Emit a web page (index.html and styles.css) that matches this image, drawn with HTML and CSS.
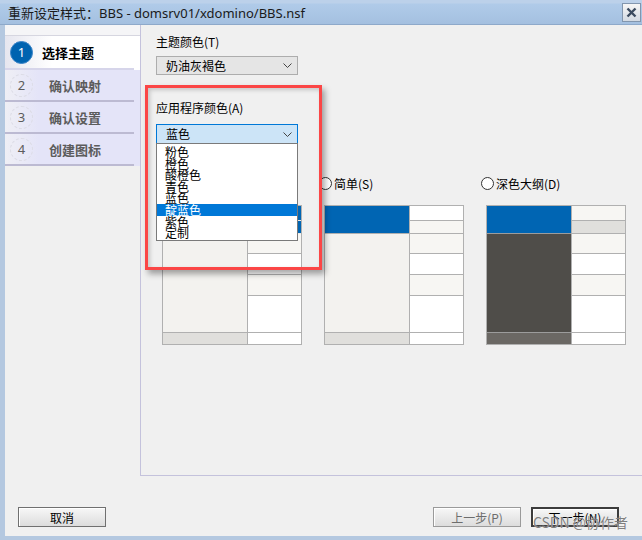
FILE: index.html
```html
<!DOCTYPE html>
<html lang="zh-CN">
<head>
<meta charset="utf-8">
<title>重新设定样式</title>
<link rel="stylesheet" href="styles.css">
</head>
<body>
<div class="window">
  <div class="titlebar">
    <span class="title">重新设定样式：BBS - domsrv01/xdomino/BBS.nsf</span>
    <div class="close"><svg width="11" height="11" viewBox="0 0 11 11"><path d="M1.5 1.5L9.5 9.5M9.5 1.5L1.5 9.5" stroke="#3b4b60" stroke-width="2.4"/></svg></div>
  </div>
  <div class="frame">
    <div class="content">
      <div class="sidebar">
        <div class="side-top"></div>
        <div class="step active"><span class="num">1</span><span class="label">选择主题</span></div>
        <div class="step"><span class="num">2</span><span class="label">确认映射</span></div>
        <div class="step"><span class="num">3</span><span class="label">确认设置</span></div>
        <div class="step"><span class="num">4</span><span class="label">创建图标</span></div>
      </div>
      <div class="main">
        <div class="field-label">主题颜色(T)</div>
        <div class="select"><span>奶油灰褐色</span><svg class="chev" width="9" height="5" viewBox="0 0 9 5"><polyline points="0.5,0.5 4.5,4.5 8.5,0.5" fill="none" stroke="#444" stroke-width="1"/></svg></div>
        <div class="field-label label-app">应用程序颜色(A)</div>
        <div class="select-wrap">
          <div class="select focused"><span>蓝色</span><svg class="chev" width="9" height="5" viewBox="0 0 9 5"><polyline points="0.5,0.5 4.5,4.5 8.5,0.5" fill="none" stroke="#444" stroke-width="1"/></svg></div>
          <ul class="listbox">
            <li>粉色</li>
            <li>橙色</li>
            <li>酸橙色</li>
            <li>青色</li>
            <li>蓝色</li>
            <li class="sel">靛蓝色</li>
            <li>紫色</li>
            <li>定制</li>
          </ul>
        </div>
        <div class="themes">
          <div class="theme">
            <div class="radio"><span class="circle"></span><span>经典(C)</span></div>
            <div class="preview classic">
              <div class="pl"><div class="ph"></div><div class="pb"></div><div class="pf"></div></div>
              <div class="pr"><div class="c1"></div><div class="c2"></div><div class="c3"></div><div class="c4"></div><div class="c5"></div><div class="c6"></div><div class="c7"></div></div>
            </div>
          </div>
          <div class="theme">
            <div class="radio"><span class="circle"></span><span>简单(S)</span></div>
            <div class="preview simple">
              <div class="pl"><div class="ph"></div><div class="pb"></div><div class="pf"></div></div>
              <div class="pr"><div class="c1"></div><div class="c2"></div><div class="c3"></div><div class="c4"></div><div class="c5"></div><div class="c6"></div><div class="c7"></div></div>
            </div>
          </div>
          <div class="theme">
            <div class="radio"><span class="circle"></span><span>深色大纲(D)</span></div>
            <div class="preview dark">
              <div class="pl"><div class="ph"></div><div class="pb"></div><div class="pf"></div></div>
              <div class="pr"><div class="c1"></div><div class="c2"></div><div class="c3"></div><div class="c4"></div><div class="c5"></div><div class="c6"></div><div class="c7"></div></div>
            </div>
          </div>
        </div>
        <div class="highlight"></div>
      </div>
    </div>
    <div class="footer">
      <div class="btn">取消</div>
      <div class="btn-group">
        <div class="btn disabled">上一步(P)</div>
        <div class="btn default">下一步(N)</div>
      </div>
    </div>
  </div>
  <div class="watermark">CSDN @协作者</div>
</div>
</body>
</html>
```
FILE: styles.css
```css
* { box-sizing: border-box; margin: 0; padding: 0; }
body {
  width: 642px; height: 540px; overflow: hidden;
  font-family: "Noto Sans", "Noto Sans CJK SC", sans-serif;
  font-size: 12px; color: #000; background: #f0f0f0;
}
.window { width: 642px; height: 540px; display: flex; flex-direction: column; background: #f0f0f0; position: relative; }
.titlebar {
  height: 25px; flex: none; display: flex; align-items: center; justify-content: space-between;
  background: linear-gradient(#bcd1ea 0, #bcd1ea 3px, #b0cbe9 4px, #a4c0e0 100%);
  border-bottom: 1px solid #8ea9ca; padding-left: 8px; padding-right: 1px;
}
.title { font-size: 13px; color: #1a1a1a; font-family: "Noto Sans", "Noto Sans CJK SC", sans-serif; }
.close {
  width: 19px; height: 19px; border: 1px solid #8296ae;
  background: linear-gradient(#f6f6f6, #d3dae3);
  display: flex; align-items: center; justify-content: center;
}
.frame { flex: 1; display: flex; flex-direction: column; border-left: 5px solid #b4c8e0; border-bottom: 4px solid #b4c8e0; }
.content { height: 451px; flex: none; display: flex; }
.sidebar { width: 135px; flex: none; }
.side-top { height: 11px; background: #f5f5f7; border-bottom: 1px solid #d6d6e0; }
.step {
  height: 32px; padding-bottom: 2px; display: flex; align-items: center;
  background: linear-gradient(#bcbad2, #bcbad2) left bottom / 129px 2px no-repeat,
              linear-gradient(to right, #efeff5, #e4e4f8 25%);
  font-weight: bold; color: #5c5c5c;
}
.step.active {
  height: 34px;
  background: linear-gradient(#d6d5ea, #d6d5ea) left bottom / 129px 2px no-repeat,
              linear-gradient(to right, #e6e6ef, #ffffff 35%);
  color: #000;
}
.num {
  width: 23px; height: 23px; border-radius: 50%; margin-left: 5px;
  display: flex; align-items: center; justify-content: center;
  font-weight: normal; font-size: 13px; border: 1px dashed #dcdce6;
}
.active .num { background: #0063b0; color: #fff; border: 1px solid #3a84c8; }
.label { margin-left: 16px; font-size: 13px; font-family: "Noto Sans CJK SC", sans-serif; }
.active .label { margin-left: 9px; }

.main { flex: 1; border-left: 1px solid #c4c2dc; border-bottom: 1px solid #c4c2dc; padding: 9px 0 0 15px; position: relative; }
.field-label { line-height: 16px; height: 16px; font-family: "Noto Sans CJK SC", sans-serif; }
.select {
  width: 142px; height: 19px; margin-top: 6px; border: 1px solid #adadad; background: #e5e5e5;
  display: flex; align-items: center; justify-content: space-between; padding: 0 5px 0 9px;
  font-family: "Noto Sans CJK SC", sans-serif; line-height: 16px;
}
.label-app { margin-top: 25px; }
.select-wrap { position: relative; margin-top: 8px; width: 142px; }
.select.focused { margin-top: 0; height: 20px; background: #cce4f7; border-color: #0078d7; }
.listbox {
  position: absolute; left: 0; top: 19px; width: 142px; height: 98px; background: #fff;
  border: 1px solid #7a7a7a; list-style: none; padding-top: 2px; z-index: 2;
  font-family: "Noto Sans CJK SC", sans-serif;
}
.listbox li { height: 11.6px; line-height: 11.6px; padding-left: 8px; font-size: 12px; }
.listbox li.sel { background: #0078d7; color: #fff; }

.themes { display: grid; grid-template-columns: repeat(3, 140px); column-gap: 22px; margin-top: 31px; margin-left: 6px; }
.radio { display: flex; align-items: center; height: 16px; margin-left: -5px; gap: 2px; font-family: "Noto Sans CJK SC", sans-serif; }
.circle { width: 13px; height: 13px; border-radius: 50%; border: 1px solid #333; background: #fff; flex: none; }
.preview { margin-top: 14px; height: 140px; border: 1px solid #b0b0b0; display: flex; }
.pl { width: 85px; border-right: 1px solid #b0b0b0; display: flex; flex-direction: column; }
.ph { height: 27px; background: #0065b3; }
.pb { flex: 1; border-top: 1px solid #b0b0b0; background: #f3f2ef; }
.pf { height: 12px; border-top: 1px solid #b0b0b0; background: #e0dfdc; }
.pr { flex: 1; display: flex; flex-direction: column; }
.pr div { border-bottom: 1px solid #b0b0b0; background: #fff; }
.pr .c1 { height: 15px; }
.pr .c2 { height: 13px; background: #f7f6f3; }
.pr .c3 { height: 20px; background: #f7f6f3; }
.pr .c4 { height: 21px; }
.pr .c5 { height: 21px; background: #f7f6f3; }
.pr .c6 { height: 37px; }
.pr .c7 { flex: 1; border-bottom: none; }
.classic .pr .c1, .classic .pr .c2 { background: #0065b3; border-bottom-color: #e8e8e8; }
.dark .ph { border-bottom: 0; }
.dark .pb { background: #4f4d49; border-top-color: #9c9c9c; }
.dark .pf { background: #6b6864; border-top-color: #9c9c9c; }
.dark .pr .c1 { background: #f7f6f3; }
.dark .pr .c2 { background: #e0dfdc; }

.highlight {
  position: absolute; left: 4px; top: 60px; width: 177px; height: 185px;
  border: 3px solid #fb4646; z-index: 3;
  box-shadow: 3px 4px 6px rgba(0,0,0,0.35), inset 2px 2px 4px rgba(0,0,0,0.18);
}

.footer { flex: 1; display: flex; justify-content: space-between; align-items: flex-start; padding: 31px 23px 0 13px; }
.btn {
  width: 88px; height: 20px; border: 1px solid #707070;
  background: linear-gradient(#f7f7f7, #dcdcdc);
  display: flex; align-items: center; justify-content: center;
  font-family: "Noto Sans CJK SC", sans-serif; font-size: 12px;
  box-shadow: inset 1px 1px 0 #fff;
}
.btn.disabled { color: #6d6d6d; border-color: #9a9a9a; }
.btn.default { border: 2px solid #3c3c3c; }
.btn-group { display: flex; gap: 10px; }
.watermark {
  position: absolute; right: 14px; bottom: 8px; font-size: 14px;
  font-family: "Noto Sans CJK SC", sans-serif;
  color: rgba(105,105,105,0.85); text-shadow: 0 0 1px #fff;
}
```
